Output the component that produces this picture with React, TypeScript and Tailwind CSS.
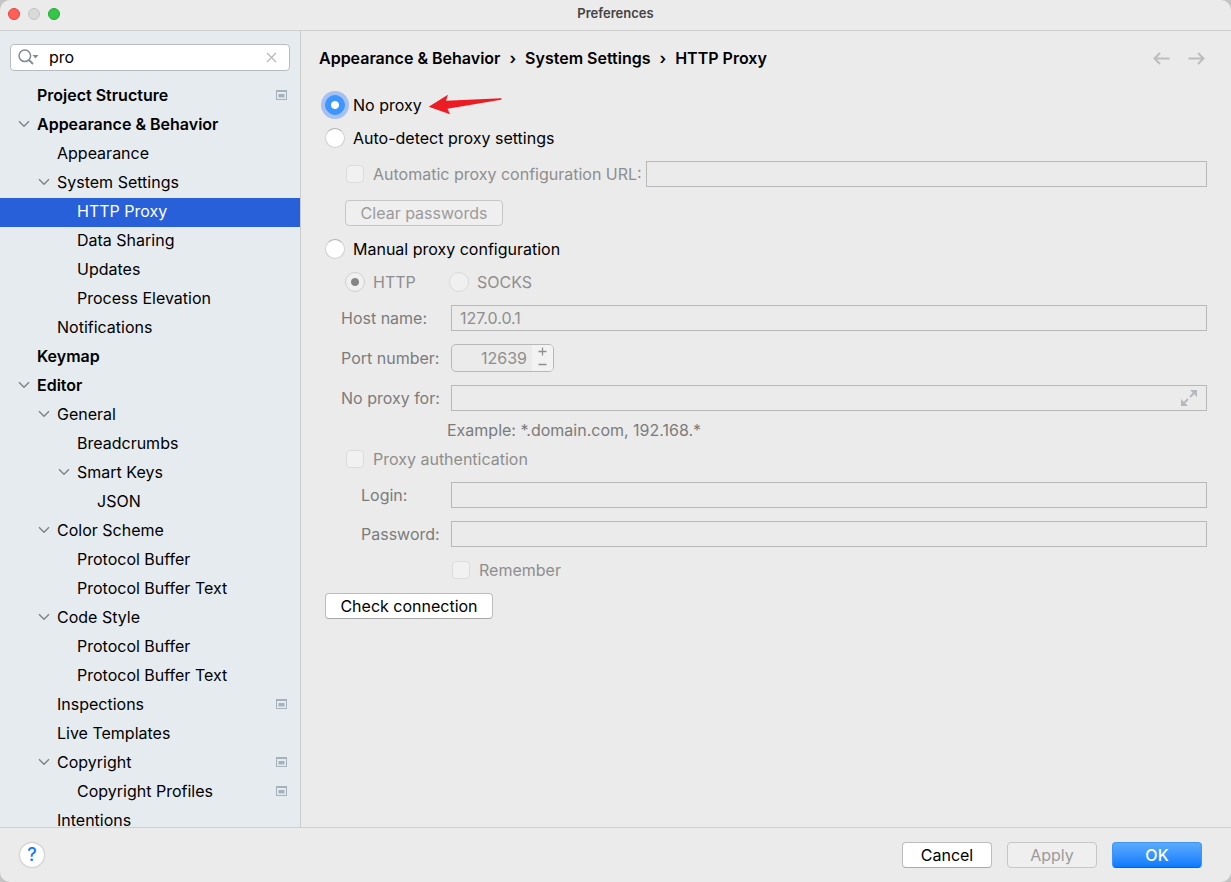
import { useState, type InputHTMLAttributes, type ButtonHTMLAttributes } from "react";

type TreeItem = {
  label: string;
  depth: 0 | 1 | 2 | 3;
  group?: boolean;
  bold?: boolean;
  project?: boolean;
};

const TREE: TreeItem[] = [
  { label: "Project Structure", depth: 0, bold: true, project: true },
  { label: "Appearance & Behavior", depth: 0, bold: true, group: true },
  { label: "Appearance", depth: 1 },
  { label: "System Settings", depth: 1, group: true },
  { label: "HTTP Proxy", depth: 2 },
  { label: "Data Sharing", depth: 2 },
  { label: "Updates", depth: 2 },
  { label: "Process Elevation", depth: 2 },
  { label: "Notifications", depth: 1 },
  { label: "Keymap", depth: 0, bold: true },
  { label: "Editor", depth: 0, bold: true, group: true },
  { label: "General", depth: 1, group: true },
  { label: "Breadcrumbs", depth: 2 },
  { label: "Smart Keys", depth: 2, group: true },
  { label: "JSON", depth: 3 },
  { label: "Color Scheme", depth: 1, group: true },
  { label: "Protocol Buffer", depth: 2 },
  { label: "Protocol Buffer Text", depth: 2 },
  { label: "Code Style", depth: 1, group: true },
  { label: "Protocol Buffer", depth: 2 },
  { label: "Protocol Buffer Text", depth: 2 },
  { label: "Inspections", depth: 1, project: true },
  { label: "Live Templates", depth: 1 },
  { label: "Copyright", depth: 1, group: true, project: true },
  { label: "Copyright Profiles", depth: 2, project: true },
  { label: "Intentions", depth: 1 },
];

const INDENT = ["pl-[17px]", "pl-[37px]", "pl-[57px]", "pl-[77px]"];

function Chevron() {
  return (
    <svg viewBox="0 0 12 8" className="ml-px h-2 w-3" fill="none" stroke="#7f8489" strokeWidth="1.5" aria-hidden="true">
      <path d="M1 1.2 6 6.2 11 1.2" />
    </svg>
  );
}

function ProjectIcon() {
  return (
    <svg viewBox="0 0 11 10" className="h-[10px] w-[11px]" aria-hidden="true">
      <path fill="#a5b1bb" fillRule="evenodd" d="M0 0h11v10H0zM1 2v7h9V2z" />
      <path fill="#a5b1bb" d="M2.5 4h6v3.5h-6z" />
    </svg>
  );
}

function SearchIcon() {
  return (
    <svg viewBox="0 0 21 16" className="h-4 w-[21px]" fill="none" aria-hidden="true">
      <circle cx="6.8" cy="6.8" r="5.8" stroke="#7f8b91" strokeWidth="1.5" />
      <path d="m11 11 4 4" stroke="#7f8b91" strokeWidth="1.8" />
      <path d="M14.5 6h6l-3 3.6z" fill="#7f8b91" />
    </svg>
  );
}

function BackArrow() {
  return (
    <svg viewBox="0 0 17 13" className="h-[13px] w-[17px]" fill="none" stroke="#bdbdbd" strokeWidth="2" aria-hidden="true">
      <path d="M16.5 6.5H1.5M7 1 1.5 6.5 7 12" />
    </svg>
  );
}

function ForwardArrow() {
  return (
    <svg viewBox="0 0 17 13" className="h-[13px] w-[17px]" fill="none" stroke="#bdbdbd" strokeWidth="2" aria-hidden="true">
      <path d="M.5 6.5h15M10 1l5.500 5.500L10 12" />
    </svg>
  );
}

function ExpandIcon() {
  return (
    <svg viewBox="0 0 16 16" className="size-4" aria-hidden="true">
      <path fill="#b4b9bd" d="M9 0h7v7z M0 9v7h7z" />
      <path stroke="#b4b9bd" strokeWidth="1.8" d="m9 7 4-4M7 9l-4 4" />
    </svg>
  );
}

function RedArrow() {
  return (
    <svg viewBox="0 0 74 21" className="ml-[6px] h-[21px] w-[74px]" fill="#ed1c24" aria-hidden="true">
      <path d="M.7 11.700 20 -.3 18 5.800 73 3.200Q74.800 4 73 4.700L19.500 13.700 22 19.300Z" />
    </svg>
  );
}

function Radio({ label, className = "", ...rest }: { label: string } & InputHTMLAttributes<HTMLInputElement>) {
  return (
    <label className={`flex items-center gap-2 has-disabled:text-[#8e8e8e] ${className}`}>
      <input
        type="radio"
        className="size-5 shrink-0 appearance-none rounded-full border border-[#cfcfcf] border-t-[#b2b2b2] bg-white bg-center bg-no-repeat outline-none checked:border-[#3d96ff] checked:bg-[#3d96ff] checked:bg-[radial-gradient(circle,white_3.5px,transparent_4.5px)] checked:ring-[4px] checked:ring-[#a6c0f2] disabled:border-[#dadada] disabled:bg-[#f0f0f0] disabled:ring-0 disabled:checked:border-[#cfcfcf] disabled:checked:bg-[#f0f0f0] disabled:checked:bg-[radial-gradient(circle,#858585_3.5px,transparent_4.5px)]"
        {...rest}
      />
      <span>{label}</span>
    </label>
  );
}

function Check({ label, className = "" }: { label: string; className?: string }) {
  return (
    <label className={`flex h-[26px] items-center gap-2 text-[#8e8e8e] ${className}`}>
      <input
        type="checkbox"
        disabled
        className="m-px size-[18px] shrink-0 appearance-none rounded-[4px] border border-[#dcdcdc] bg-[#f1f1f1]"
      />
      <span className="whitespace-nowrap">{label}</span>
    </label>
  );
}

const FIELD = "h-[26px] w-full min-w-0 border border-[#b8b8b8] bg-[#ebebeb] px-2 text-[#8e8e8e]";

function Button({ className = "", ...rest }: ButtonHTMLAttributes<HTMLButtonElement>) {
  return (
    <button
      type="button"
      className={`h-[26px] rounded-[4px] border border-[#bdbdbd] border-b-[#a8a8a8] bg-white disabled:border-[#c6c6c6] disabled:bg-[#efefef] disabled:text-[#9b9b9b] ${className}`}
      {...rest}
    />
  );
}

function Sidebar() {
  const [query, setQuery] = useState("pro");
  const [selected, setSelected] = useState(4);
  return (
    <aside className="flex w-[301px] shrink-0 flex-col overflow-hidden border-r border-[#cbcbcb] bg-[#e6ebef]">
      <div className="mx-[10px] mt-[13px] flex h-[27px] shrink-0 items-center rounded-[4px] border border-[#b9bcbe] bg-white pb-px pl-[7px] pr-3">
        <SearchIcon />
        <input
          aria-label="Search settings"
          value={query}
          onChange={(e) => setQuery(e.target.value)}
          className="ml-[10px] min-w-0 flex-1 bg-transparent outline-none"
        />
        <button type="button" aria-label="Clear search" onClick={() => setQuery("")}>
          <svg viewBox="0 0 11 11" className="size-[11px]" stroke="#b5b9bc" strokeWidth="1.300" aria-hidden="true">
            <path d="m1 1 9 9M10 1l-9 9" />
          </svg>
        </button>
      </div>
      <nav aria-label="Settings" className="mt-[11px] min-h-0 flex-1 overflow-hidden">
        <ul>
          {TREE.map((item, i) => (
            <li key={i}>
              <a
                href="#"
                aria-current={i === selected ? "page" : undefined}
                onClick={(e) => {
                  e.preventDefault();
                  setSelected(i);
                }}
                className={`flex h-[29px] items-center pb-1 pr-[13px] ${INDENT[item.depth]} ${item.bold ? "font-semibold" : ""} ${i === selected ? "bg-[#2860da] text-white" : ""}`}
              >
                <span className="w-5 shrink-0">{item.group && <Chevron />}</span>
                <span className="flex-1 whitespace-nowrap">{item.label}</span>
                {item.project && <ProjectIcon />}
              </a>
            </li>
          ))}
        </ul>
      </nav>
    </aside>
  );
}

function ProxyForm() {
  const [mode, setMode] = useState("none");
  return (
    <form className="flex flex-col items-stretch pl-6 pr-6" onSubmit={(e) => e.preventDefault()}>
      <div className="mt-5 flex h-[26px] items-center">
        <Radio label="No proxy" name="mode" checked={mode === "none"} onChange={() => setMode("none")} />
        <RedArrow />
      </div>
      <div className="mt-[7px] flex h-[26px] items-center">
        <Radio label="Auto-detect proxy settings" name="mode" checked={mode === "auto"} onChange={() => setMode("auto")} />
      </div>
      <div className="mt-[10px] flex items-center pl-5">
        <Check label="Automatic proxy configuration URL:" className="w-[301px] shrink-0" />
        <input aria-label="Automatic proxy configuration URL" disabled className={FIELD} />
      </div>
      <div className="mt-[13px] flex pl-5">
        <Button disabled className="w-[158px]">Clear passwords</Button>
      </div>
      <div className="mt-[10px] flex h-[26px] items-center">
        <Radio label="Manual proxy configuration" name="mode" checked={mode === "manual"} onChange={() => setMode("manual")} />
      </div>
      <div className="mt-[7px] flex h-[26px] items-center pl-5">
        <Radio label="HTTP" name="kind" defaultChecked disabled className="w-[104px]" />
        <Radio label="SOCKS" name="kind" disabled />
      </div>
      <div className="mt-[10px] flex items-center">
        <label htmlFor="host" className="w-[126px] shrink-0 pl-4 text-[#7b7b7b]">Host name:</label>
        <input id="host" disabled defaultValue="127.0.0.1" className={FIELD} />
      </div>
      <div className="mt-[13px] flex items-center">
        <label htmlFor="port" className="w-[126px] shrink-0 pl-4 text-[#7b7b7b]">Port number:</label>
        <div className="flex h-7 w-[103px] overflow-hidden rounded-[5px] border border-[#b8b8b8]">
          <input id="port" disabled defaultValue="12639" className="w-20 pr-[5px] text-right text-[#8e8e8e]" />
          <div className="flex flex-1 flex-col bg-[#f2f2f2] text-[#8e8e8e]">
            <button type="button" disabled aria-label="Increase port" className="flex flex-1 items-center justify-center">
              <svg viewBox="0 0 9 9" className="size-[9px]" stroke="currentColor" strokeWidth="1.300" aria-hidden="true">
                <path d="M4.500 .5v8M.5 4.500h8" />
              </svg>
            </button>
            <button type="button" disabled aria-label="Decrease port" className="flex flex-1 items-center justify-center">
              <svg viewBox="0 0 9 9" className="size-[9px]" stroke="currentColor" strokeWidth="1.300" aria-hidden="true">
                <path d="M.5 4.500h8" />
              </svg>
            </button>
          </div>
        </div>
      </div>
      <div className="mt-[13px] flex items-center">
        <label htmlFor="bypass" className="w-[126px] shrink-0 pl-4 text-[#7b7b7b]">No proxy for:</label>
        <div className="flex h-[26px] flex-1 items-center border border-[#b8b8b8] pr-[9px]">
          <input id="bypass" disabled className="min-w-0 flex-1 px-2" />
          <button type="button" disabled aria-label="Expand field">
            <ExpandIcon />
          </button>
        </div>
      </div>
      <p className="mt-[6px] pl-[122px] leading-[26px] text-[#7b7b7b]">Example: *.domain.com, 192.168.*</p>
      <Check label="Proxy authentication" className="mt-[3px] pl-5" />
      <div className="mt-[10px] flex items-center">
        <label htmlFor="login" className="w-[126px] shrink-0 pl-9 text-[#7b7b7b]">Login:</label>
        <input id="login" disabled className={FIELD} />
      </div>
      <div className="mt-[13px] flex items-center">
        <label htmlFor="password" className="w-[126px] shrink-0 whitespace-nowrap pl-9 text-[#7b7b7b]">Password:</label>
        <input id="password" type="password" disabled className={FIELD} />
      </div>
      <Check label="Remember" className="mt-[10px] pl-[126px]" />
      <div className="mt-[10px] flex">
        <Button className="w-[168px]">Check connection</Button>
      </div>
    </form>
  );
}

export default function App() {
  return (
    <div className="h-screen bg-[#c4c4c4] font-['Inter','Liberation_Sans',sans-serif] text-[16px] leading-[22px] text-black">
      <div className="flex h-full flex-col overflow-hidden rounded-[10px] bg-[#ebebeb]">
        <header className="relative flex h-[31px] shrink-0 items-center justify-center border-b border-[#cfcfcf] pb-1">
          <div className="absolute left-2 top-2 flex gap-2">
            <button type="button" aria-label="Close" className="size-3 rounded-full border border-[#e2463f] bg-[#ff5f57]" />
            <button type="button" aria-label="Minimize" disabled className="size-3 rounded-full border border-[#c3c3c3] bg-[#d9d9d9]" />
            <button type="button" aria-label="Zoom" className="size-3 rounded-full border border-[#28a735] bg-[#34c648]" />
          </div>
          <h1 className="text-[13px] font-semibold text-[#434343]">Preferences</h1>
        </header>
        <div className="flex min-h-0 flex-1">
          <Sidebar />
          <main className="min-w-0 flex-1 overflow-hidden">
            <div className="mt-[13px] flex h-7 items-center justify-between pl-[18px] pr-[26px]">
              <nav aria-label="Breadcrumb" className="flex gap-[9px] font-semibold">
                <span>Appearance &amp; Behavior</span>
                <span>›</span>
                <span>System Settings</span>
                <span>›</span>
                <span>HTTP Proxy</span>
              </nav>
              <div className="flex gap-[18px]">
                <button type="button" disabled aria-label="Back"><BackArrow /></button>
                <button type="button" disabled aria-label="Forward"><ForwardArrow /></button>
              </div>
            </div>
            <ProxyForm />
          </main>
        </div>
        <footer className="flex h-[55px] shrink-0 items-center justify-between border-t border-[#cfcfcf] pl-5 pr-[29px]">
          <button type="button" aria-label="Help" className="flex size-6 items-center justify-center rounded-full bg-white text-[18px] font-medium text-[#0a7aff] shadow-[0_0_2px_#8f8f8f]">
            ?
          </button>
          <div className="flex gap-[15px]">
            <Button className="w-[90px]">Cancel</Button>
            <Button disabled className="w-[90px]">Apply</Button>
            <button type="button" className="h-[26px] w-[90px] rounded-[4px] border border-[#3f94f5] border-b-[#0860e8] bg-linear-to-b from-[#5aabfb] to-[#067aff] font-medium text-white">
              OK
            </button>
          </div>
        </footer>
      </div>
    </div>
  );
}
